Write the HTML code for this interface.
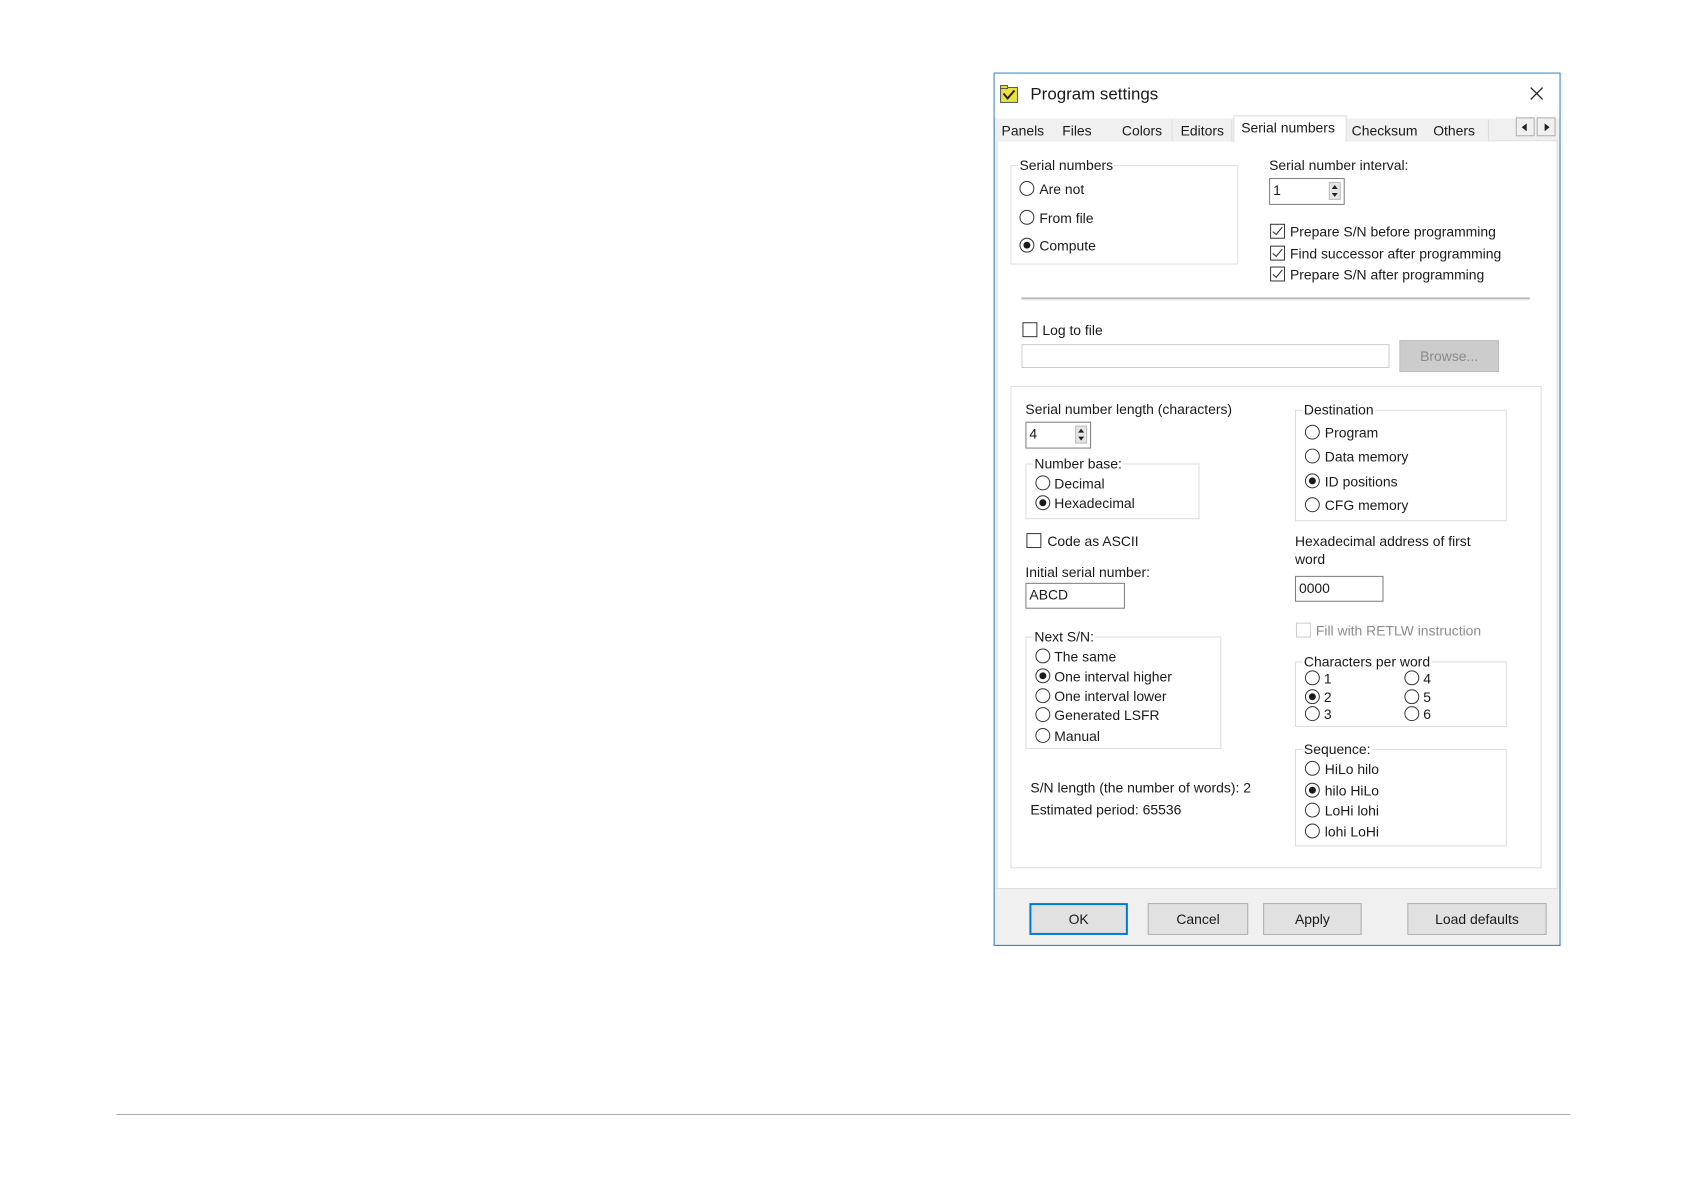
<!DOCTYPE html>
<html><head><meta charset="utf-8"><style>
body{margin:0;width:1684px;height:1190px;background:#fff;position:relative;overflow:hidden;font-family:"Liberation Sans",sans-serif;font-size:14px;color:#1a1a1a}
#w{position:absolute;left:0;top:0;width:1684px;height:1190px;transform:scale(0.9946);transform-origin:0 0}
.a{position:absolute;white-space:nowrap}
.t{position:absolute;white-space:nowrap;line-height:16px;transform:translateY(-8px)}
.r{position:absolute;width:15px;height:15px;border:1px solid #333;border-radius:50%;background:#fff;box-sizing:border-box;transform:translate(-8px,-8px)}
.r.on::after{content:"";position:absolute;left:3px;top:3px;width:7px;height:7px;border-radius:50%;background:#1a1a1a}
.c{position:absolute;width:15px;height:15px;border:1px solid #333;background:#fff;box-sizing:border-box;transform:translate(-8px,-8px)}
.c.on::after{content:"";position:absolute;left:4px;top:0px;width:4px;height:9px;border:solid #222;border-width:0 1.5px 1.5px 0;transform:rotate(40deg)}
.g{position:absolute;border:1px solid #dcdcdc;box-sizing:border-box}
.g>span{position:absolute;top:-9px;left:7px;background:#fff;padding:0 1px;line-height:16px}
.in{position:absolute;border:1px solid #7a7a7a;background:#fff;box-sizing:border-box;padding-left:3px;line-height:22px}
.sp{position:absolute;right:3px;top:3px;width:12px;height:18px;background:#e5e5e5;border:1px solid #bbb;box-sizing:border-box}
.sp::before{content:"";position:absolute;left:2px;top:2px;border:3px solid transparent;border-bottom:4px solid #222;border-top:0}
.sp::after{content:"";position:absolute;left:2px;bottom:2px;border:3px solid transparent;border-top:4px solid #222;border-bottom:0}
.b{position:absolute;background:#e1e1e1;border:1px solid #adadad;box-sizing:border-box;text-align:center;line-height:30px}
.tab{position:absolute;top:120px;height:22px;line-height:22px;background:#f0f0f0;border-right:1px solid #dcdcdc;padding-left:4px}
</style></head><body><div id="w">
<div class="a" style="left:117px;top:1120px;width:1462px;height:1px;background:#aaa"></div>

<div class="a" style="left:999px;top:73px;width:570px;height:878px;border:1px solid #1c78c8;background:#f0f0f0;box-sizing:border-box"></div>
<div class="a" style="left:1000px;top:74px;width:568px;height:45px;background:#fff"></div>
<svg class="a" style="left:1005px;top:85px" width="19" height="19" viewBox="0 0 19 19"><rect x="1" y="3" width="17" height="15" fill="#e8e23a" stroke="#555"/><rect x="1" y="1" width="7" height="3" fill="#e8e23a" stroke="#555"/><path d="M4 9 L8 14 L15 6" stroke="#222" stroke-width="2" fill="none"/></svg>
<div class="t" style="left:1036px;top:95px;font-size:17px">Program settings</div>
<svg class="a" style="left:1538px;top:87px" width="14" height="14"><path d="M1 1L13 13M13 1L1 13" stroke="#222" stroke-width="1.3"/></svg>

<div class="a" style="left:1002px;top:141px;width:564px;height:753px;background:#fff;border:1px solid #dcdcdc;box-sizing:border-box"></div>
<div class="tab" style="left:1003px;width:60px">Panels</div>
<div class="tab" style="left:1064px;width:56px">Files</div>
<div class="tab" style="left:1121px;width:58px;padding-left:7px;box-sizing:border-box">Colors</div>
<div class="tab" style="left:1180px;width:59px;padding-left:7px;box-sizing:border-box">Editors</div>
<div class="a" style="left:1240px;top:116px;width:114px;height:27px;background:#fff;border:1px solid #dcdcdc;border-bottom:none;box-sizing:border-box;line-height:22px;padding-left:7px">Serial numbers</div>
<div class="tab" style="left:1355px;width:81px">Checksum</div>
<div class="tab" style="left:1437px;width:55px">Others</div>
<div class="a" style="left:1524px;top:118px;width:19px;height:19px;border:1px solid #adadad;background:#f0f0f0;box-sizing:border-box"><div class="a" style="left:5px;top:5px;border:4px solid transparent;border-right:5px solid #222;border-left:0"></div></div>
<div class="a" style="left:1545px;top:118px;width:19px;height:19px;border:1px solid #adadad;background:#f0f0f0;box-sizing:border-box"><div class="a" style="left:7px;top:5px;border:4px solid transparent;border-left:5px solid #222;border-right:0"></div></div>

<div class="g" style="left:1016px;top:166px;width:229px;height:100px"><span>Serial numbers</span></div>
<div class="r" style="left:1033px;top:190px"></div><div class="t" style="left:1045px;top:190px">Are not</div>
<div class="r" style="left:1033px;top:219px"></div><div class="t" style="left:1045px;top:219px">From file</div>
<div class="r on" style="left:1033px;top:247px"></div><div class="t" style="left:1045px;top:247px">Compute</div>

<div class="t" style="left:1276px;top:166px">Serial number interval:</div>
<div class="in" style="left:1276px;top:179px;width:76px;height:27px">1<div class="sp"></div></div>
<div class="c on" style="left:1285px;top:233px"></div><div class="t" style="left:1297px;top:233px">Prepare S/N before programming</div>
<div class="c on" style="left:1285px;top:255px"></div><div class="t" style="left:1297px;top:255px">Find successor after programming</div>
<div class="c on" style="left:1285px;top:276px"></div><div class="t" style="left:1297px;top:276px">Prepare S/N after programming</div>
<div class="a" style="left:1027px;top:299px;width:511px;height:2px;background:#b8b8b8;border-bottom:1px solid #fff"></div>

<div class="c" style="left:1036px;top:332px"></div><div class="t" style="left:1048px;top:332px">Log to file</div>
<div class="in" style="left:1027px;top:346px;width:370px;height:24px;border-color:#ccc"></div>
<div class="b" style="left:1407px;top:342px;width:100px;height:32px;background:#ccc;border-color:#bfbfbf;color:#8a8a8a">Browse...</div>

<div class="g" style="left:1016px;top:388px;width:534px;height:485px"></div>
<div class="t" style="left:1031px;top:411px">Serial number length (characters)</div>
<div class="in" style="left:1031px;top:424px;width:66px;height:27px">4<div class="sp"></div></div>
<div class="g" style="left:1031px;top:466px;width:175px;height:56px"><span>Number base:</span></div>
<div class="r" style="left:1049px;top:486px"></div><div class="t" style="left:1060px;top:486px">Decimal</div>
<div class="r on" style="left:1049px;top:506px"></div><div class="t" style="left:1060px;top:506px">Hexadecimal</div>
<div class="c" style="left:1040px;top:544px"></div><div class="t" style="left:1053px;top:544px">Code as ASCII</div>
<div class="t" style="left:1031px;top:575px">Initial serial number:</div>
<div class="in" style="left:1031px;top:586px;width:100px;height:26px">ABCD</div>
<div class="g" style="left:1031px;top:640px;width:197px;height:113px"><span>Next S/N:</span></div>
<div class="r" style="left:1049px;top:660px"></div><div class="t" style="left:1060px;top:660px">The same</div>
<div class="r on" style="left:1049px;top:680px"></div><div class="t" style="left:1060px;top:680px">One interval higher</div>
<div class="r" style="left:1049px;top:700px"></div><div class="t" style="left:1060px;top:700px">One interval lower</div>
<div class="r" style="left:1049px;top:719px"></div><div class="t" style="left:1060px;top:719px">Generated LSFR</div>
<div class="r" style="left:1049px;top:740px"></div><div class="t" style="left:1060px;top:740px">Manual</div>
<div class="t" style="left:1036px;top:792px">S/N length (the number of words): 2</div>
<div class="t" style="left:1036px;top:814px">Estimated period: 65536</div>

<div class="g" style="left:1302px;top:412px;width:213px;height:112px"><span>Destination</span></div>
<div class="r" style="left:1320px;top:435px"></div><div class="t" style="left:1332px;top:435px">Program</div>
<div class="r" style="left:1320px;top:459px"></div><div class="t" style="left:1332px;top:459px">Data memory</div>
<div class="r on" style="left:1320px;top:484px"></div><div class="t" style="left:1332px;top:484px">ID positions</div>
<div class="r" style="left:1320px;top:508px"></div><div class="t" style="left:1332px;top:508px">CFG memory</div>
<div class="t" style="left:1302px;top:544px">Hexadecimal address of first</div>
<div class="t" style="left:1302px;top:562px">word</div>
<div class="in" style="left:1302px;top:579px;width:89px;height:26px">0000</div>
<div class="c" style="left:1311px;top:634px;border-color:#ccc"></div><div class="t" style="left:1323px;top:634px;color:#8d8d8d">Fill with RETLW instruction</div>
<div class="g" style="left:1302px;top:665px;width:213px;height:66px"><span>Characters per word</span></div>
<div class="r" style="left:1320px;top:682px"></div><div class="t" style="left:1331px;top:682px">1</div>
<div class="r on" style="left:1320px;top:701px"></div><div class="t" style="left:1331px;top:701px">2</div>
<div class="r" style="left:1320px;top:718px"></div><div class="t" style="left:1331px;top:718px">3</div>
<div class="r" style="left:1420px;top:682px"></div><div class="t" style="left:1431px;top:682px">4</div>
<div class="r" style="left:1420px;top:701px"></div><div class="t" style="left:1431px;top:701px">5</div>
<div class="r" style="left:1420px;top:718px"></div><div class="t" style="left:1431px;top:718px">6</div>
<div class="g" style="left:1302px;top:753px;width:213px;height:98px"><span>Sequence:</span></div>
<div class="r" style="left:1320px;top:773px"></div><div class="t" style="left:1332px;top:773px">HiLo hilo</div>
<div class="r on" style="left:1320px;top:795px"></div><div class="t" style="left:1332px;top:795px">hilo HiLo</div>
<div class="r" style="left:1320px;top:815px"></div><div class="t" style="left:1332px;top:815px">LoHi lohi</div>
<div class="r" style="left:1320px;top:836px"></div><div class="t" style="left:1332px;top:836px">lohi LoHi</div>

<div class="b" style="left:1035px;top:908px;width:99px;height:32px;border:2px solid #0078d7;line-height:28px">OK</div>
<div class="b" style="left:1154px;top:908px;width:101px;height:32px">Cancel</div>
<div class="b" style="left:1270px;top:908px;width:99px;height:32px">Apply</div>
<div class="b" style="left:1415px;top:908px;width:140px;height:32px">Load defaults</div>
</div></body></html>
